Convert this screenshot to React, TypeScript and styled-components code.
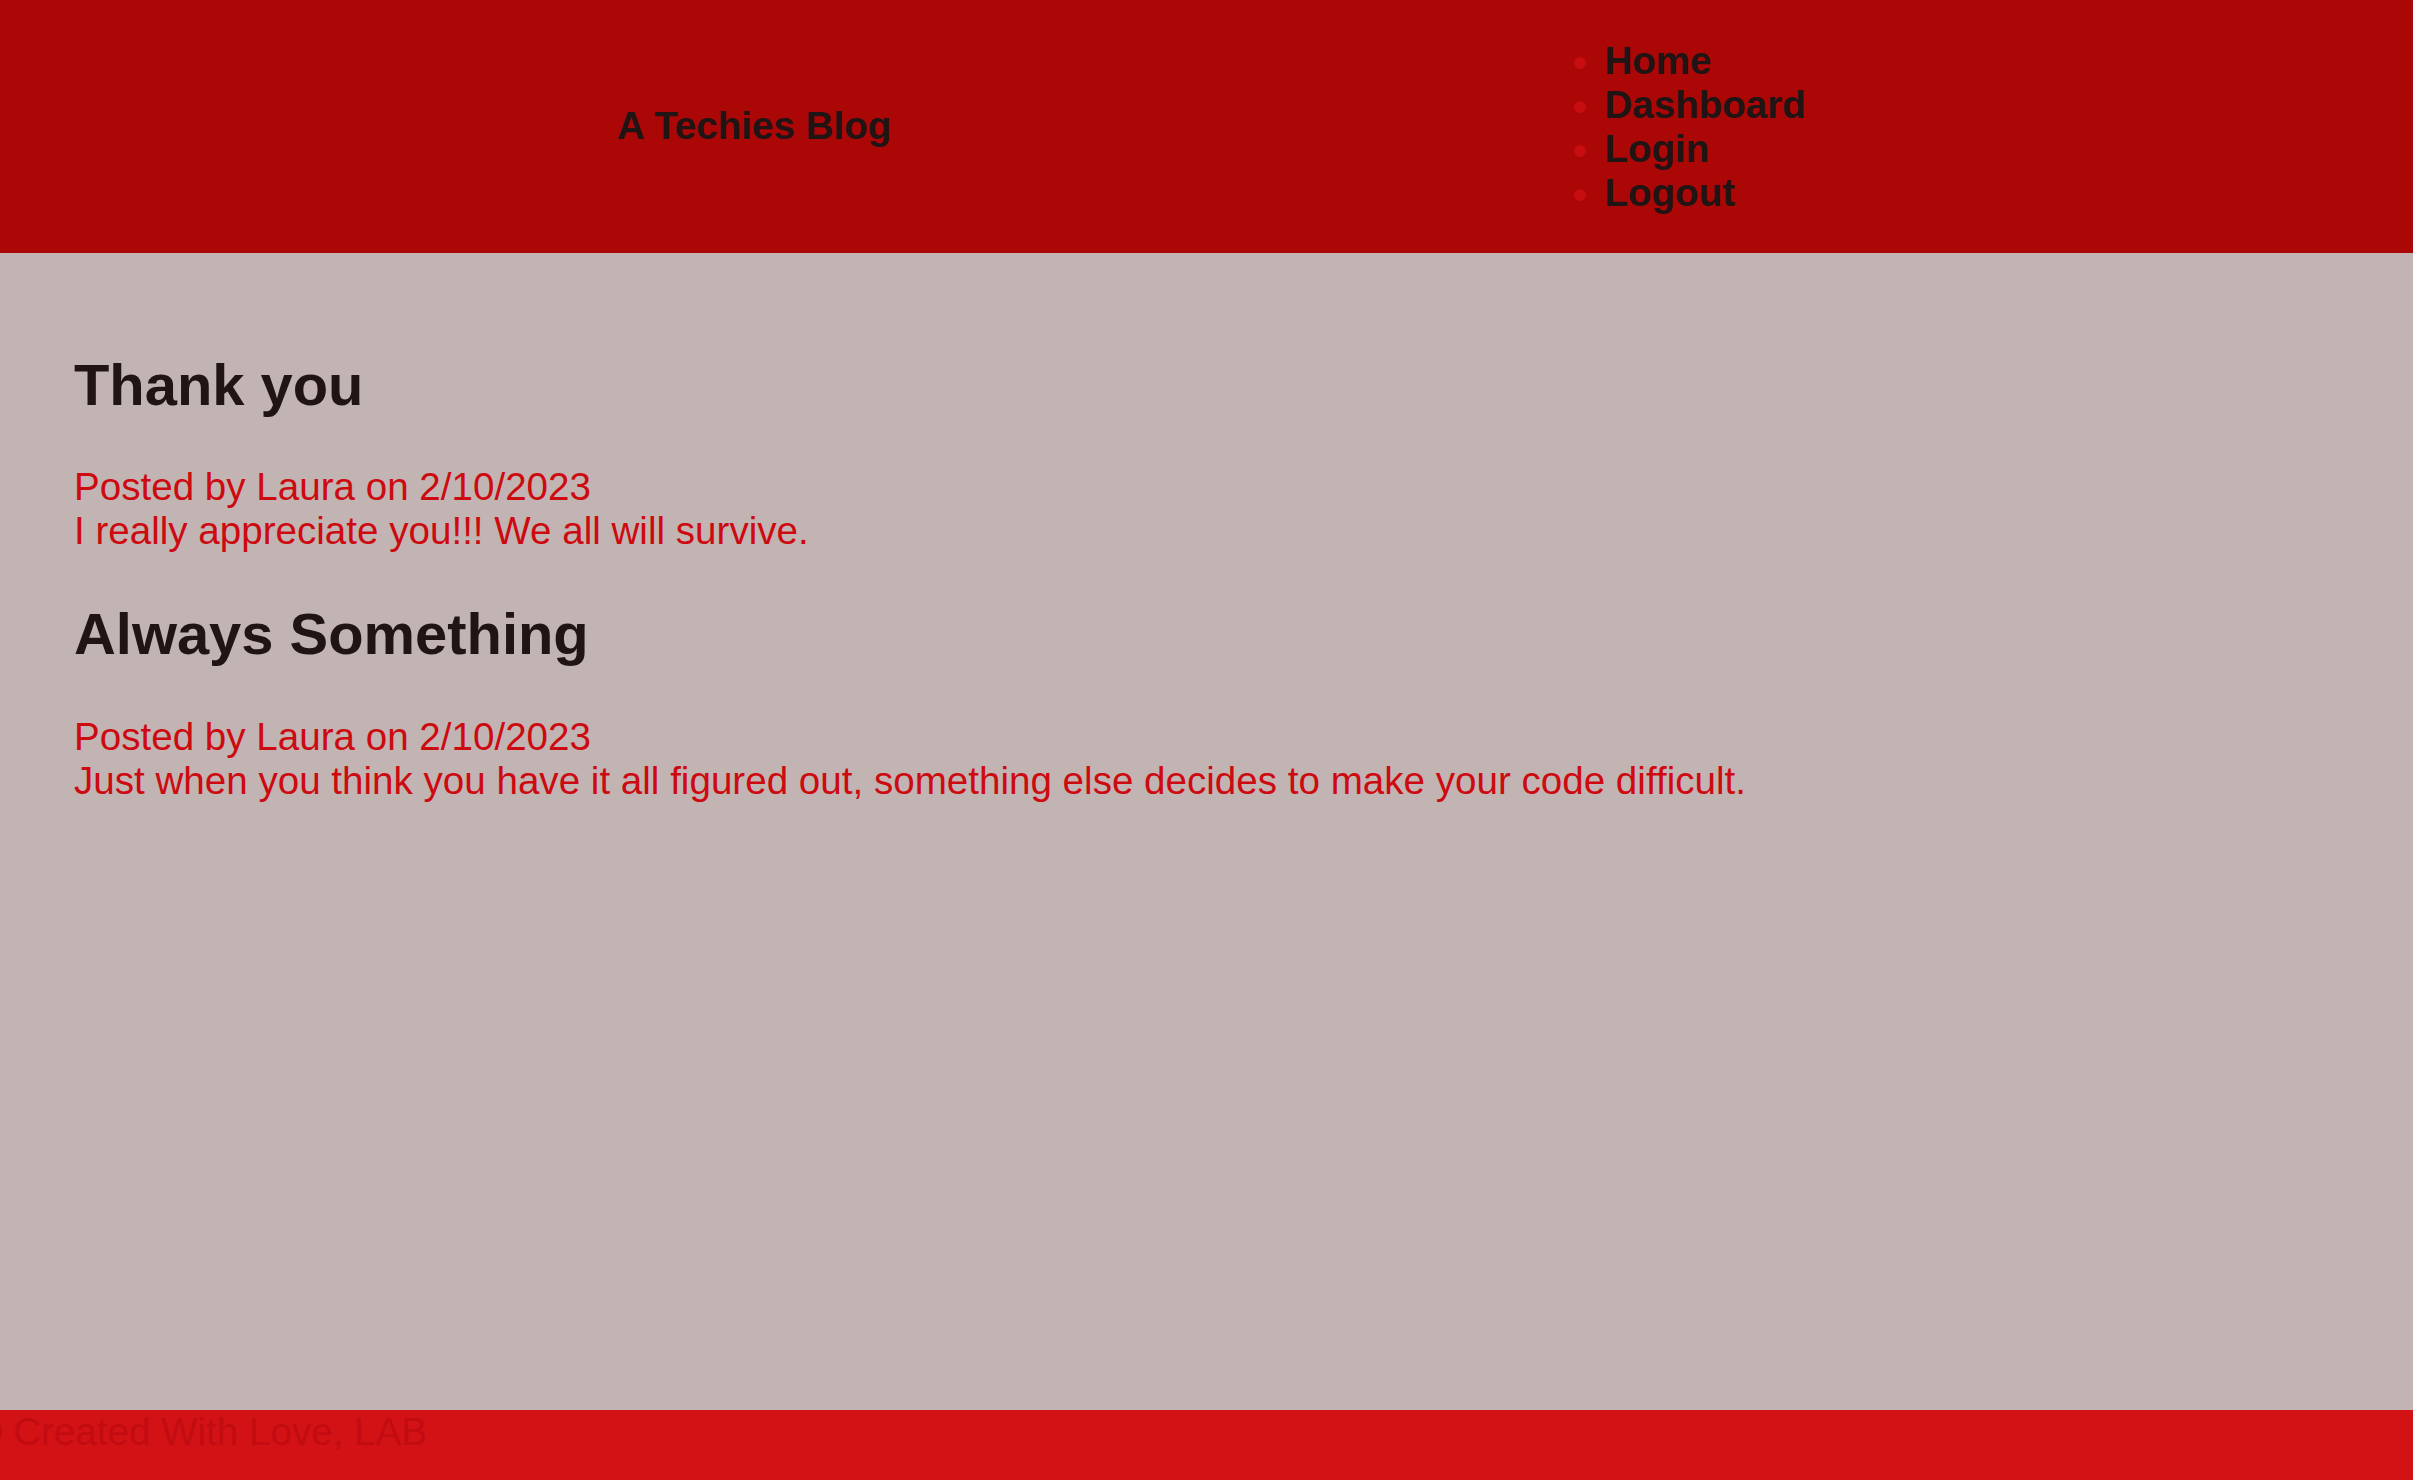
import React from "react";
import styled, { createGlobalStyle } from "styled-components";

const GlobalStyle = createGlobalStyle`
  html, body {
    margin: 0;
    padding: 0;
  }
  body {
    background: #c3b4b4;
    font-family: "Liberation Sans", Arial, sans-serif;
    font-size: 38.6px;
  }
`;

const Page = styled.div`
  display: flex;
  flex-direction: column;
  min-height: 100vh;
`;

const Header = styled.header`
  display: flex;
  align-items: center;
  background: #ab0707;
  padding-left: 617px;
`;

const Title = styled.div`
  font-weight: bold;
  font-size: 38.6px;
  color: #201414;
  white-space: nowrap;
`;

const NavList = styled.ul`
  margin: 38.6px 0 38.2px 670px;
  padding-left: 43px;
  list-style: disc;
  color: #c80d10;
`;

const NavItem = styled.li`
  line-height: normal;
`;

const NavLink = styled.a`
  color: #201414;
  font-weight: bold;
  text-decoration: none;
`;

const Main = styled.main`
  flex: 1;
  padding: 51px 0 0 74px;
`;

const Post = styled.article`
  color: #cc0a10;
`;

const PostTitle = styled.h2`
  font-size: 57.9px;
  font-weight: bold;
  color: #201414;
  margin: 47.8px 0;
`;

const Line = styled.div`
  white-space: nowrap;
`;

const Footer = styled.footer`
  background: #d31216;
  height: 70px;
  overflow: hidden;
`;

const FooterText = styled.div`
  color: #c20c11;
  margin-left: -26px;
  white-space: nowrap;
`;

const posts = [
  {
    title: "Thank you",
    author: "Laura",
    date: "2/10/2023",
    body: "I really appreciate you!!! We all will survive.",
  },
  {
    title: "Always Something",
    author: "Laura",
    date: "2/10/2023",
    body: "Just when you think you have it all figured out, something else decides to make your code difficult.",
  },
];

export default function App() {
  return (
    <>
      <GlobalStyle />
      <Page>
        <Header>
          <Title>A Techies Blog</Title>
          <nav>
            <NavList>
              {["Home", "Dashboard", "Login", "Logout"].map((n) => (
                <NavItem key={n}>
                  <NavLink href="#">{n}</NavLink>
                </NavItem>
              ))}
            </NavList>
          </nav>
        </Header>
        <Main>
          {posts.map((p) => (
            <Post key={p.title}>
              <PostTitle>{p.title}</PostTitle>
              <Line>
                Posted by {p.author} on {p.date}
              </Line>
              <Line>{p.body}</Line>
            </Post>
          ))}
        </Main>
        <Footer>
          <FooterText>© Created With Love, LAB</FooterText>
        </Footer>
      </Page>
    </>
  );
}
